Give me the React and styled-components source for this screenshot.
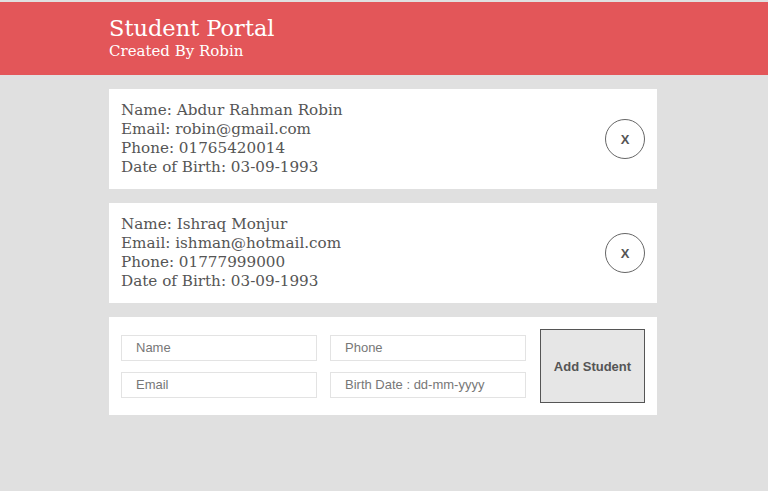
import React from "react";
import styled, { createGlobalStyle } from "styled-components";

const Global = createGlobalStyle`
  html, body { margin: 0; padding: 0; }
  body {
    background: #e0e0e0;
    padding-top: 2px;
    min-height: 489px;
    font-family: "DejaVu Serif", "Liberation Serif", serif;
  }
  * { box-sizing: border-box; }
`;

const Header = styled.header`
  background: #e35659;
  height: 73px;
  color: #fff;
`;

const Wrap = styled.div`
  width: 548px;
  margin-left: calc(50% - 275px);
`;

const HeaderInner = styled(Wrap)`
  padding-top: 13px;
`;

const Title = styled.h1`
  margin: 0;
  font-weight: normal;
  font-size: 22.5px;
  line-height: 27px;
`;

const Subtitle = styled.div`
  font-size: 15px;
  line-height: 19px;
`;

const List = styled(Wrap)`
  display: flex;
  flex-direction: column;
  gap: 14px;
  padding-top: 14px;
`;

const Card = styled.div`
  background: #fff;
  display: flex;
  align-items: center;
  justify-content: space-between;
  padding: 0 12px;
  height: ${(p) => p.$h || 100}px;
`;

const Info = styled.div`
  color: #555;
  font-size: 15.2px;
  line-height: 19px;
`;

const RemoveBtn = styled.button`
  width: 40px;
  height: 40px;
  border-radius: 50%;
  border: 1px solid #666;
  background: #fff;
  color: #555;
  font-family: "Liberation Sans", Arial, sans-serif;
  font-weight: bold;
  font-size: 13px;
  padding: 0;
  cursor: pointer;
`;

const Form = styled.div`
  display: grid;
  grid-template-columns: 196px 196px;
  column-gap: 13px;
  row-gap: 11px;
`;

const Input = styled.input`
  width: 196px;
  height: 26px;
  border: 1px solid #e3e3e3;
  padding: 0 14px;
  font-family: "Liberation Sans", Arial, sans-serif;
  font-size: 13px;
  color: #555;
  outline: none;
  &::placeholder { color: #777; }
`;

const AddBtn = styled.button`
  width: 105px;
  height: 74px;
  background: #e6e6e6;
  border: 1px solid #555;
  color: #555;
  font-family: "Liberation Sans", Arial, sans-serif;
  font-weight: bold;
  font-size: 13px;
  padding: 0;
`;

const students = [
  { name: "Abdur Rahman Robin", email: "robin@gmail.com", phone: "01765420014", dob: "03-09-1993" },
  { name: "Ishraq Monjur", email: "ishman@hotmail.com", phone: "01777999000", dob: "03-09-1993" },
];

export default function App() {
  return (
    <>
      <Global />
      <Header>
        <HeaderInner>
          <Title>Student Portal</Title>
          <Subtitle>Created By Robin</Subtitle>
        </HeaderInner>
      </Header>
      <List>
        {students.map((s) => (
          <Card key={s.name}>
            <Info>
              <div>Name: {s.name}</div>
              <div>Email: {s.email}</div>
              <div>Phone: {s.phone}</div>
              <div>Date of Birth: {s.dob}</div>
            </Info>
            <RemoveBtn>X</RemoveBtn>
          </Card>
        ))}
        <Card $h={98}>
          <Form>
            <Input placeholder="Name" />
            <Input placeholder="Phone" />
            <Input placeholder="Email" />
            <Input placeholder="Birth Date : dd-mm-yyyy" />
          </Form>
          <AddBtn>Add Student</AddBtn>
        </Card>
      </List>
    </>
  );
}
